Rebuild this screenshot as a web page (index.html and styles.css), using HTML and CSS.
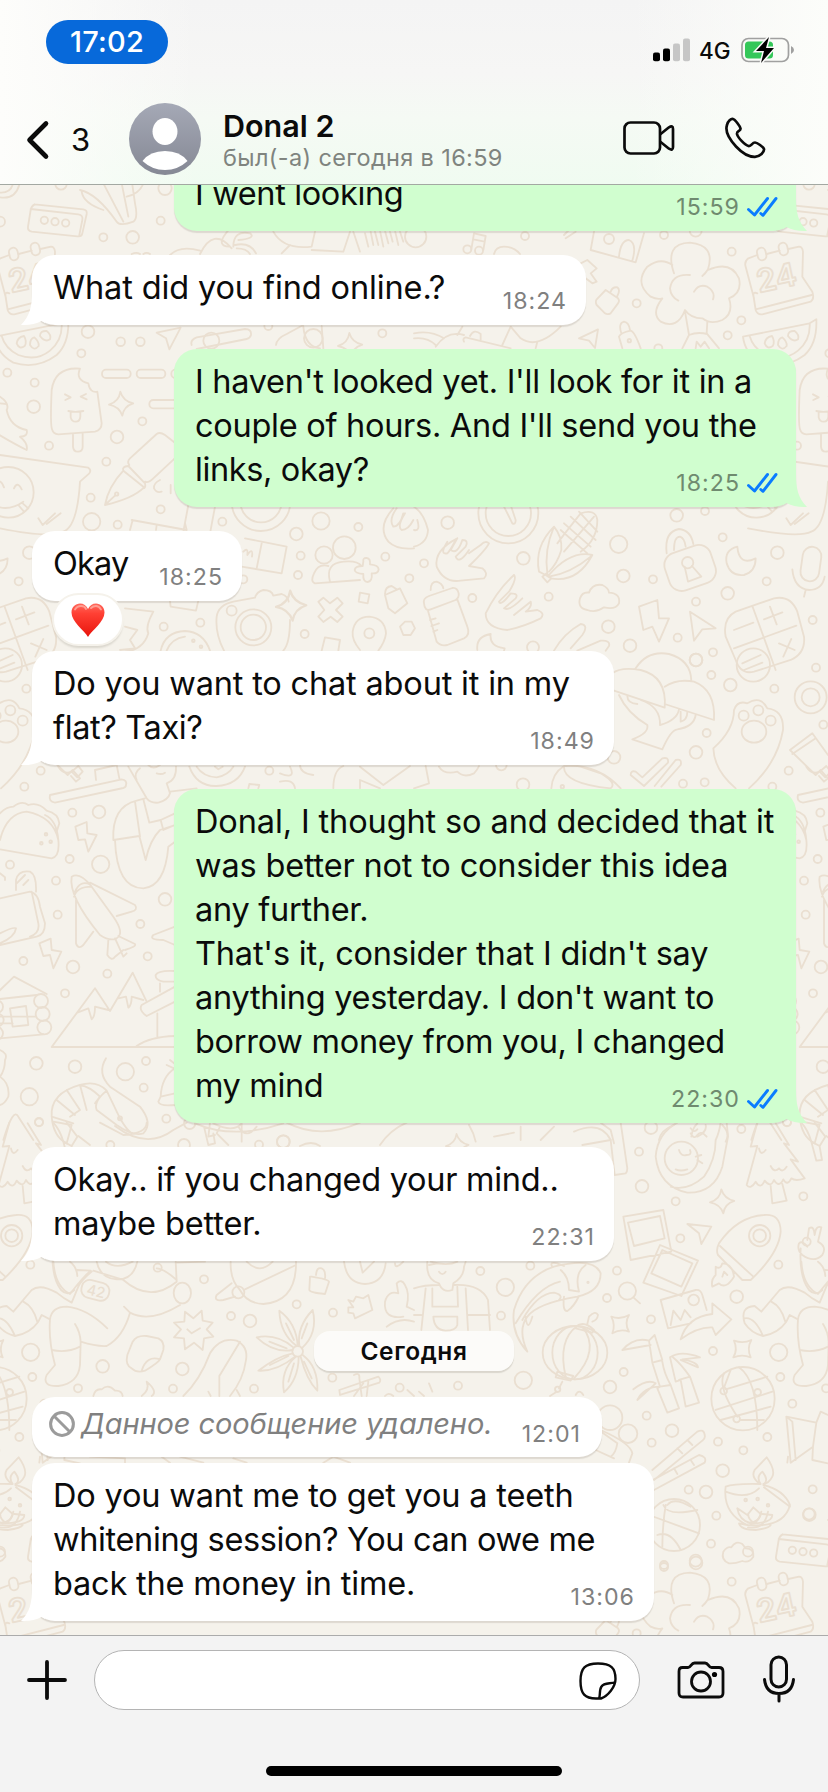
FILE: index.html
```html
<!DOCTYPE html>
<html lang="ru">
<head>
<meta charset="utf-8">
<title>Donal 2</title>
<link rel="stylesheet" href="styles.css">
</head>
<body>
<svg class="defs" aria-hidden="true">
  <defs>
    <symbol id="tail-in" viewBox="0 0 24 34"><path d="M11 0C11 14 9 24 0 33C8 33.500 15 32 20.500 29L24 31V0Z"/></symbol>
    <symbol id="tail-out" viewBox="0 0 24 34"><path d="M13 0C13 14 15 24 24 33C16 33.500 9 32 3.500 29L0 31V0Z"/></symbol>
    <symbol id="ticks" viewBox="0 0 32 22"><path d="M2.500 13.500L8.500 19L21.500 2.500M14.800 17.500L17 19.300L30 2.500" fill="none" stroke="#0a7cff" stroke-width="2.900" stroke-linecap="round" stroke-linejoin="round"/></symbol>
    <symbol id="spark" viewBox="-40 -40 80 80"><path d="M-2 -36Q6 -8 37 -1Q8 8 4 36Q-6 8 -36 3Q-6 -6 -2 -36Z"/></symbol>
    <linearGradient id="heart" x1="0" y1="0" x2="0" y2="1"><stop offset="0" stop-color="#ff6a5e"/><stop offset=".3" stop-color="#ff4034"/><stop offset="1" stop-color="#e8140c"/></linearGradient>
    <linearGradient id="ava" x1="0" y1="0" x2="0" y2="1"><stop offset="0" stop-color="#a5a9b6"/><stop offset="1" stop-color="#858894"/></linearGradient>
  </defs>
</svg>

<header class="top">
  <div class="status">
    <span class="clock">17:02</span>
    <div class="status-right">
      <svg width="38" height="24" viewBox="0 0 38 24"><rect x="0" y="14.500" width="7" height="8.800" rx="2"/><rect x="10" y="10.500" width="7" height="12.800" rx="2"/><g fill="#c6c6c6"><rect x="20" y="5.500" width="7" height="17.800" rx="2"/><rect x="30" y=".5" width="7" height="22.800" rx="2"/></g></svg>
      <span class="net">4G</span>
      <svg width="54" height="26" viewBox="0 0 54 26"><rect x="1" y="1.500" width="46.500" height="23" rx="6.500" fill="none" stroke="#a0a0a0" stroke-width="1.700"/><path d="M50 9Q53 10.500 53 13T50 17Z" fill="#a0a0a0"/><rect x="4" y="4.500" width="28" height="17" rx="3.500" fill="#34c759"/><path d="M28 0L15 14H23L20 26L33 11H25Z" fill="#000" stroke="#fafaf9" stroke-width="3" paint-order="stroke"/></svg>
    </div>
  </div>
  <div class="nav">
    <svg class="back" width="24" height="40" viewBox="0 0 24 40"><path d="M20 3.500L3.500 20L20 36.500" fill="none" stroke="#0b0b0b" stroke-width="4.600" stroke-linecap="round" stroke-linejoin="round"/></svg>
    <span class="unread">3</span>
    <svg class="avatar" width="72" height="72" viewBox="0 0 72 72"><circle cx="36" cy="36" r="36" fill="url(#ava)"/><ellipse cx="36" cy="28.500" rx="12.500" ry="13.500" fill="#fff"/><path d="M13.500 58Q21 48 36 48T58.500 58Q49 67 36 67T13.500 58Z" fill="#fff"/></svg>
    <div class="who"><span class="name">Donal 2</span><span class="seen">был(-а) сегодня в 16:59</span></div>
    <svg class="video" width="52" height="36" viewBox="0 0 52 36"><g fill="none" stroke="#0b0b0b" stroke-width="2.700" stroke-linejoin="round"><rect x="1.500" y="2.500" width="35.500" height="31" rx="6"/><path d="M37 14.500L46 7.300Q50 5 50 9V27Q50 31 46 28.700L37 21.500"/></g></svg>
    <svg class="phone" width="42" height="42" viewBox="0 0 42 42"><path d="M3 8C4 4 7 1.500 9 2C11 2.500 16 9 16.500 11.500C17 14 12.500 14 13 17C14 21 21 28 24.500 29C27.500 29.500 28 25.500 31 25.500C33 25.500 39.500 30 40 32C40.500 35 36 39.500 31 39.800C26 40 19 37 12 29.500C5 22 1 14 3 8Z" fill="none" stroke="#0b0b0b" stroke-width="2.700" stroke-linejoin="round"/></svg>
  </div>
</header>

<main class="chat">
  <svg class="wallpaper" viewBox="0 185 828 1450" aria-hidden="true">
    <defs>
      <g id="doodles">
        <g transform="scale(.33333)">
          <path d="M104 613L250 628Q262 630 260 642L247 700Q245 711 232 709L95 695Q82 692 84 680L92 630Q94 618 104 613M92 627L235 643Q250 646 247 660L238 705"/>
          <circle cx="133" cy="661" r="11"/><circle cx="165" cy="665" r="11"/><circle cx="197" cy="669" r="11"/>
          <path d="M240 570Q290 580 350 665Q360 680 400 665Q415 655 405 610L395 540M310 550L370 665M365 550L385 650M245 575Q250 610 310 630M0 592Q50 600 60 545M0 578Q35 580 40 545M380 590Q420 580 430 550"/>
          <circle cx="495" cy="565" r="20"/><circle cx="482" cy="662" r="12"/><circle cx="183" cy="552" r="17"/><circle cx="0" cy="665" r="15"/>
        </g>
        <g transform="translate(0 230) scale(.33333)">
          <circle cx="398" cy="22" r="19"/><circle cx="310" cy="22" r="12"/><circle cx="264" cy="305" r="19"/><circle cx="362" cy="335" r="13"/><circle cx="421" cy="335" r="13"/><circle cx="244" cy="370" r="12"/><circle cx="22" cy="428" r="12"/><circle cx="104" cy="458" r="12"/><circle cx="101" cy="530" r="19"/><circle cx="427" cy="574" r="12"/><circle cx="351" cy="621" r="19"/><circle cx="147" cy="647" r="12"/><circle cx="319" cy="695" r="12"/><circle cx="272" cy="803" r="12"/><circle cx="275" cy="875" r="26"/><circle cx="353" cy="884" r="12"/><circle cx="482" cy="838" r="12"/><circle cx="667" cy="875" r="12"/><circle cx="88" cy="968" r="19"/><circle cx="56" cy="1054" r="12"/><circle cx="889" cy="912" r="19"/><circle cx="963" cy="873" r="26"/><circle cx="1075" cy="891" r="12"/><circle cx="902" cy="977" r="12"/><circle cx="894" cy="1035" r="12"/><circle cx="1156" cy="980" r="12"/><circle cx="1228" cy="1045" r="12"/><circle cx="914" cy="1212" r="12"/><circle cx="491" cy="1190" r="12"/><circle cx="601" cy="1178" r="12"/><circle cx="1147" cy="310" r="12"/><circle cx="805" cy="288" r="12"/><circle cx="730" cy="1048" r="12"/>
          <path d="M-15 320Q-10 370 40 398Q110 420 170 375Q208 340 205 268M-15 320L185 280Q188 330 150 362Q110 395 55 375Q15 355 5 318M205 268L185 280"/>
          <path d="M50 340Q52 322 72 318Q82 335 74 348Q58 360 50 340ZM90 345Q90 325 103 322Q118 335 116 348Q102 365 90 345ZM120 318Q120 302 140 303Q155 315 150 328Q135 338 120 318Z"/>
          <path d="M157 600Q150 590 155 480Q165 410 240 416Q225 450 265 460Q270 490 292 485L305 580Q305 600 285 605L175 613Q160 612 157 600ZM219 613V650Q220 665 233 665Q248 665 248 650V610M195 493L212 502L196 510M258 492L242 500L260 508M205 543Q225 548 250 543M212 547V562Q215 575 227 575Q240 575 241 560V545"/>
          <rect x="306" y="419" width="86" height="25" rx="12"/><rect x="410" y="419" width="86" height="25" rx="12"/><rect x="514" y="419" width="86" height="25" rx="12"/><rect x="448" y="510" width="86" height="25" rx="12"/>
          <use href="#spark" x="323" y="481" width="80" height="80"/><use href="#spark" x="1010" y="305" width="80" height="80"/><use href="#spark" x="823" y="1077" width="100" height="100"/>
          <path d="M315 825Q325 770 370 722L432 772Q400 805 315 825ZM345 797L318 822M370 722Q365 710 385 708L435 760Q438 774 430 775M388 705Q380 695 390 685L470 612Q480 605 495 615L540 650M435 755Q445 760 460 745L530 680M480 750Q460 760 462 775Q470 790 485 785M512 765V790"/><circle cx="350" cy="792" r="5"/>
          <path d="M0 675L265 713Q275 720 268 730L240 755Q232 890 190 905Q150 925 0 895M115 865L128 885L165 850M140 882L182 850M-15 765Q0 740 12 772M42 775Q52 752 65 778M-30 820Q20 850 70 815M55 825L72 845M68 820L85 835"/><circle cx="25" cy="787" r="76"/>
          <path d="M0 500Q30 520 20 540Q30 590 80 600Q85 620 60 620Q85 640 80 660Q40 640 -10 610M0 520L20 522"/>
          <path d="M470 308L542 293L508 358L498 325ZM575 345Q570 330 590 322L735 297Q755 297 753 315Q750 325 740 327L590 357M828 345Q830 325 860 312L910 285M910 290Q915 350 960 355M965 288L970 355"/><circle cx="634" cy="332" r="24"/><circle cx="940" cy="325" r="28"/>
          <path d="M395 870L560 900L555 880M390 900L398 870M565 825L550 905M645 830L630 910M470 885L468 900M510 1115L512 1130L588 1142L595 1112"/>
          <circle cx="783" cy="815" r="88"/><circle cx="783" cy="815" r="62"/>
          <circle cx="1033" cy="953" r="34"/><circle cx="972" cy="975" r="26"/>
          <path d="M1080 1050L945 1060Q930 1055 942 1030Q955 1000 985 1008M990 1055Q975 1000 1030 995Q1070 990 1085 1008M1090 995Q1088 983 1100 984Q1112 985 1110 1003Q1135 1005 1136 1018Q1135 1032 1115 1030Q1118 1053 1103 1056Q1088 1055 1090 1032Q1065 1030 1064 1020Q1065 1008 1088 1008Z"/>
          <path d="M735 925L860 950L845 1030L725 1010M785 940L770 1015M730 965Q745 950 742 975Q760 950 756 980"/>
          <path d="M672 1262Q645 1210 650 1160Q655 1125 700 1115L765 1103Q770 1085 790 1080Q815 1080 820 1097L845 1092Q865 1100 866 1115M870 1170Q870 1240 850 1262"/><circle cx="760" cy="1192" r="54"/><circle cx="760" cy="1192" r="38"/><circle cx="695" cy="1142" r="15"/>
          <path d="M955 1115L970 1103L990 1120L1012 1103L1028 1120L1008 1140L1028 1160L1012 1176L992 1160L970 1176L955 1160L973 1140ZM1080 1088L1108 1093L1103 1120L1076 1115ZM1080 1260Q1055 1230 1058 1205Q1065 1160 1108 1160Q1155 1165 1158 1210Q1155 1235 1135 1262M965 1262L975 1222L1020 1230L1015 1262M1155 1095L1200 1075L1222 1120L1185 1150L1165 1135ZM1155 1092Q1155 1070 1175 1068L1190 1078M1200 1190L1215 1175H1235L1245 1195L1232 1215H1210Z"/><circle cx="1108" cy="1210" r="15"/>
          <path d="M482 1262Q495 1205 555 1203Q610 1205 630 1262M500 1262Q515 1225 555 1220M375 1135L460 1145Q435 1190 445 1210Q430 1260 375 1265M375 1190L412 1200L390 1230L405 1255L360 1260"/><circle cx="580" cy="1232" r="4"/><circle cx="603" cy="1250" r="4"/>
          <path d="M1180 835Q1130 890 1165 935Q1190 960 1242 955M1190 835Q1165 870 1180 890Q1200 890 1210 850M1215 850Q1190 890 1205 900Q1225 900 1240 870"/>
          <path d="M510 75Q540 45 600 62M600 72Q640 -10 695 55M690 50Q640 50 690 -5M700 50Q700 0 750 10Q770 25 715 30M705 45Q750 35 768 70M710 55Q740 55 750 72M395 72Q410 65 420 72M430 72Q440 65 450 72M820 5Q850 60 935 50L945 5M935 60L1030 65L1050 5M845 70L870 45M1060 5L1080 65M1095 10L1105 50M1112 5L1120 45M1125 5L1135 45M1140 2L1150 50M1155 2L1165 40M1170 5L1178 35M1185 2L1195 45M1200 5L1210 35"/>
        </g>
        <g transform="translate(414 230) scale(.33333)">
          <circle cx="333" cy="18" r="12"/><circle cx="845" cy="2" r="18"/><circle cx="750" cy="15" r="12"/><circle cx="953" cy="65" r="12"/><circle cx="668" cy="220" r="12"/><circle cx="982" cy="271" r="12"/><circle cx="941" cy="316" r="12"/><circle cx="733" cy="355" r="12"/><circle cx="101" cy="878" r="19"/><circle cx="328" cy="985" r="19"/><circle cx="30" cy="1000" r="12"/><circle cx="175" cy="1104" r="12"/><circle cx="404" cy="1100" r="12"/><circle cx="614" cy="943" r="26"/><circle cx="628" cy="1038" r="19"/><circle cx="717" cy="1048" r="12"/><circle cx="788" cy="856" r="19"/><circle cx="873" cy="843" r="12"/><circle cx="926" cy="922" r="12"/><circle cx="941" cy="1090" r="19"/><circle cx="846" cy="1115" r="12"/><circle cx="583" cy="1190" r="19"/><circle cx="648" cy="1247" r="19"/><circle cx="791" cy="1223" r="12"/><circle cx="357" cy="1252" r="18"/><circle cx="1196" cy="1170" r="12"/><circle cx="897" cy="1267" r="12"/><circle cx="846" cy="1290" r="19"/><circle cx="892" cy="1335" r="12"/>
          <path d="M180 10L215 18L208 60M180 10L172 58M178 28L212 35M240 72Q245 50 270 50Q300 50 318 72"/><circle cx="160" cy="58" r="12"/><circle cx="195" cy="62" r="12"/><circle cx="5" cy="20" r="32"/>
          <path d="M540 5L530 60L665 97L690 10M615 80Q620 30 645 30Q670 40 655 92M450 15L475 -10M455 25L485 5M500 100L520 90L548 115L530 130L548 155L535 160L515 145"/><circle cx="585" cy="27" r="15"/>
          <path d="M575 180L612 205Q618 212 612 220L590 250Q580 255 573 250L548 225Q543 215 548 208ZM590 185Q595 170 610 172Q620 180 610 198M495 325L552 298L543 354L525 332ZM622 310Q612 280 630 275Q645 278 648 300M615 320Q620 308 650 302Q662 305 680 355M615 320L625 355M150 335Q145 325 155 322L290 355M168 318Q180 295 200 312L200 330M130 315L145 290M265 345L290 290L320 325Q370 360 440 290M370 335L365 355M0 310Q50 300 90 325M0 325Q40 320 65 345M65 350Q100 300 150 315"/><circle cx="646" cy="332" r="5"/>
          <path d="M780 130Q750 40 828 38Q905 45 882 118Q875 130 865 138M775 105Q740 80 700 110Q660 160 710 200Q730 210 745 205Q710 250 740 275Q790 300 813 240Q830 265 865 265Q890 285 925 270Q960 250 945 205Q985 190 975 145Q950 90 882 120M828 135Q775 130 768 175Q770 200 793 212M840 185Q855 160 880 170Q905 185 897 208M813 245L825 315L805 355M880 275L878 310L915 355M825 315Q850 305 880 312M845 355L848 335L860 350L872 335L885 355"/>
          <path d="M1030 75L1003 85Q990 95 995 110L1020 205M1058 72L1097 62M1123 57L1155 50Q1165 50 1167 65L1165 140L1195 185Q1202 208 1190 215L1045 253Q1030 255 1025 240L1018 195Q1018 185 1030 190M1025 238L1193 195"/><rect x="1030" y="53" width="26" height="38" rx="13" transform="rotate(-12 1043 72)"/><rect x="1095" y="38" width="26" height="38" rx="13" transform="rotate(-12 1108 57)"/>
          <text x="1035" y="188" transform="rotate(-12 1035 188)" font-size="95">24</text>
          <path d="M758 970Q750 905 795 897Q830 900 838 942M780 960Q780 920 798 920Q812 925 815 950"/><rect x="756" y="955" width="145" height="118" rx="38" transform="rotate(-19 828 1014)"/><path d="M812 1010L822 1055L862 1040L834 1008"/><circle cx="821" cy="998" r="17"/>
          <path d="M970 950Q930 960 938 1000Q950 1040 990 1035Q1025 1025 1025 985Q975 1010 970 950Z"/><rect x="1163" y="950" width="56" height="104" rx="28" transform="rotate(8 1190 1000)"/><path d="M1135 1018Q1140 1075 1185 1080Q1225 1080 1232 1040M1175 1080L1170 1100"/>
          <circle cx="283" cy="850" r="90"/><circle cx="283" cy="850" r="68"/><path d="M265 820L295 880Q305 885 305 870L290 825"/>
          <path d="M420 890Q360 950 375 1025L395 1035L410 1045Q490 1060 535 975Q470 960 405 1035M420 890Q445 920 442 960Q430 1000 405 1025M400 1030Q390 960 420 890M405 1040Q470 1030 530 980M385 1040L398 1030L412 1045L400 1057ZM440 900L520 970M450 880L530 950M470 860L545 930M495 845L550 905M430 940Q460 900 500 850Q545 835 550 870Q550 930 500 965M450 965L540 860"/>
          <path d="M130 925Q60 960 68 1010Q90 1060 140 1052L210 1045Q225 1030 205 1015L165 1008Q215 960 225 940Q215 930 200 945L165 970M130 925L110 960Q130 975 145 930Q165 930 155 950L125 980Q135 1005 165 960M100 935Q75 975 100 970Q110 960 125 930"/>
          <path d="M300 1035Q250 1080 215 1150Q215 1195 280 1200Q330 1190 380 1165Q395 1150 370 1140L335 1145Q355 1130 350 1115L300 1155M300 1035Q310 1045 285 1085L255 1115Q260 1130 290 1090Q315 1090 305 1105L270 1135Q285 1145 325 1105"/>
          <path d="M50 1080Q50 1055 68 1055Q85 1060 88 1075M30 1120Q26 1105 45 1098L115 1074Q130 1072 134 1090Q136 1102 125 1110L50 1138Q32 1145 30 1120ZM42 1142L68 1235Q80 1250 100 1245L150 1225Q170 1215 160 1190L130 1108M48 1170L65 1165M52 1188L75 1180M58 1205L70 1200"/>
          <path d="M520 1140Q490 1135 498 1105Q505 1085 525 1088Q535 1060 565 1065Q585 1075 585 1088Q620 1090 615 1120Q605 1140 570 1132Q545 1150 520 1140ZM675 1130L730 1110L735 1165L765 1165L735 1235L715 1190L688 1200ZM828 1145L905 1195L865 1198L840 1232Z"/>
          <path d="M190 1260Q185 1220 230 1212Q225 1250 272 1255L270 1262M420 1262Q450 1210 500 1182Q525 1185 505 1215L470 1255M490 1262L560 1232Q590 1230 585 1248L575 1262"/>
          <path d="M1080 1105Q1130 1095 1150 1145L1170 1220Q1175 1270 1130 1290L1020 1325Q980 1335 965 1290L935 1220Q925 1165 965 1145L1080 1105M1015 1128L1085 1320M960 1255L1147 1187M960 1200L1018 1178M1050 1168L1105 1147M1068 1130L1088 1183M1095 1240L1142 1260M1132 1227L1108 1280M985 1300L1040 1275M990 1320L1045 1298"/><circle cx="1018" cy="1305" r="50"/>
          <path d="M0 830Q30 850 42 900Q40 940 0 950M0 900Q20 905 10 870"/>
        </g>
        <g transform="translate(0 640) scale(.33333)">
          <circle cx="79" cy="146" r="12"/><circle cx="122" cy="392" r="12"/><circle cx="73" cy="440" r="12"/><circle cx="217" cy="518" r="12"/><circle cx="297" cy="516" r="19"/><circle cx="209" cy="657" r="12"/><circle cx="302" cy="673" r="26"/><circle cx="30" cy="674" r="12"/><circle cx="168" cy="722" r="12"/><circle cx="173" cy="824" r="12"/><circle cx="495" cy="778" r="19"/><circle cx="421" cy="852" r="12"/><circle cx="443" cy="949" r="12"/><circle cx="70" cy="963" r="12"/><circle cx="219" cy="981" r="19"/><circle cx="322" cy="1001" r="12"/><circle cx="195" cy="1060" r="12"/><circle cx="109" cy="1270" r="19"/><circle cx="225" cy="1280" r="19"/><circle cx="376" cy="1295" r="26"/><circle cx="438" cy="1263" r="12"/><circle cx="431" cy="1343" r="12"/><circle cx="88" cy="1370" r="26"/><circle cx="117" cy="1446" r="12"/><circle cx="499" cy="1436" r="12"/><circle cx="569" cy="1450" r="17"/><circle cx="808" cy="392" r="12"/><circle cx="850" cy="1505" r="19"/>
          <path d="M150 465L365 418Q382 420 378 435Q378 442 370 444L165 488Q145 485 150 465ZM288 420L285 390L350 375L358 415M215 395L232 412L248 395L235 378ZM175 380Q190 405 215 395M410 420Q400 400 420 385M385 380L440 475Q450 490 475 488Q505 480 510 460L500 430Q530 420 528 380M445 375Q460 390 480 375M470 400Q485 405 495 398"/>
          <path d="M568 380Q590 440 650 438Q715 435 735 380M590 380Q610 410 650 412Q685 405 700 380M645 380L655 388L668 380M0 520Q20 500 40 500Q65 480 85 495Q115 485 140 512Q175 520 178 550L170 575M0 600Q20 520 80 515Q160 530 175 600Q180 650 155 655L0 628M135 525Q170 540 175 600M0 520Q-20 530 -25 560"/><circle cx="138" cy="583" r="4"/><circle cx="124" cy="610" r="4"/><circle cx="152" cy="605" r="4"/>
          <path d="M226 560L260 546L262 580L290 585L265 635L255 598L235 600ZM118 910L152 896L155 930L184 935L160 985L150 945L130 948Z"/>
          <path d="M340 600Q335 500 410 482L435 475M340 600L418 588L437 660Q450 600 480 570L525 555M345 600Q350 745 430 745Q495 740 505 620L525 605M405 485L420 590M430 478L448 548L482 540L490 570L525 555M482 540L525 520M510 455L590 445"/>
          <path d="M215 710Q240 695 275 740L340 830Q375 880 350 895Q330 905 300 885Q205 770 215 710ZM222 770Q230 740 275 740M225 755Q240 720 270 733M270 728L405 795Q415 810 395 815L350 828M228 780V910Q235 930 250 915L280 875M325 900L322 945Q335 965 345 950L370 930M345 895L370 950L380 940M355 888L405 912Q410 920 375 930M525 860L460 885Q445 900 490 900L525 915"/>
          <path d="M155 1221L285 1045L330 1113L398 998L440 1085M232 1118L265 1105L275 1138Q285 1130 285 1100L325 1110M355 1075L378 1070L385 1103Q395 1095 395 1070L430 1080M155 1221H525M525 1040L425 1095Q415 1110 440 1128L525 1085M480 1030V1055M525 1025H490Q465 1020 467 1005Q475 990 525 993M472 1120V1190M410 1218Q450 1190 525 1188"/>
          <path d="M-10 1078L110 1065M-10 1060L42 1010L140 1062M-10 1130H105M0 1195L130 1183M30 1105L78 1098L85 1155L38 1160ZM-10 1150H38"/><circle cx="123" cy="1083" r="21"/><circle cx="128" cy="1122" r="21"/><circle cx="133" cy="1162" r="21"/><circle cx="-10" cy="1100" r="19"/><circle cx="-8" cy="1140" r="19"/><circle cx="-10" cy="1180" r="19"/>
          <path d="M318 1255Q290 1300 330 1340L420 1400Q460 1450 430 1480Q400 1490 350 1455L290 1410Q280 1385 320 1352L360 1435Q380 1470 395 1480M320 1352Q290 1320 240 1335Q150 1360 155 1430Q160 1490 200 1510M240 1335Q270 1340 300 1370M200 1350L240 1410M170 1380L225 1425M155 1430L220 1450M240 1335L260 1410M300 1370L285 1390M210 1430L240 1410M160 1445L215 1455L200 1510"/><circle cx="360" cy="1435" r="6"/>
          <path d="M525 1285Q485 1310 482 1370L475 1385Q478 1400 525 1395M500 1275L522 1285M510 1260L522 1270M482 1370L525 1360M0 1230Q25 1240 15 1260Q15 1290 0 1310Q30 1330 25 1370Q10 1400 -10 1395M10 1500Q40 1400 55 1430L100 1500M840 400Q890 420 870 380M1000 445Q1000 390 1030 378M840 425Q880 415 885 445M940 405Q900 400 900 375M1080 380L1150 435L1230 378M1080 445L1080 420L1140 445M745 445L748 432L778 435L775 445"/>
          <path d="M0 775L90 755Q115 760 120 800L135 850Q135 885 110 890L0 915M95 755L115 850Q120 880 90 890M48 750V720Q55 690 90 695Q110 705 108 755M50 730L75 705M70 735L85 720M0 700L15 712V720M0 880Q40 860 48 865Q45 890 0 910"/>
          <path d="M585 1450Q700 1500 850 1450M612 1460L625 1515L645 1510L640 1480M715 1460Q740 1500 770 1460"/>
        </g>
        <g transform="translate(414 640) scale(.33333)">
          <circle cx="846" cy="60" r="19"/><circle cx="949" cy="135" r="19"/><circle cx="878" cy="279" r="12"/><circle cx="846" cy="337" r="19"/><circle cx="600" cy="352" r="19"/><circle cx="807" cy="431" r="12"/><circle cx="872" cy="427" r="12"/><circle cx="327" cy="434" r="19"/><circle cx="262" cy="375" r="16"/><circle cx="1228" cy="254" r="12"/><circle cx="1206" cy="83" r="12"/><circle cx="711" cy="1463" r="19"/><circle cx="982" cy="1467" r="12"/>
          <path d="M600 152L752 203Q760 110 680 90Q620 80 595 100M665 85Q700 30 765 42Q830 60 832 122M752 140Q790 115 840 125Q905 150 900 240L752 192M615 165Q640 220 700 255Q705 280 655 298L745 328Q770 270 790 268Q840 260 845 225M680 180Q740 200 738 255Q790 240 795 208M640 168Q640 190 670 192M820 215Q820 240 800 245V215"/>
          <path d="M965 445Q900 390 898 325Q960 270 960 210Q970 180 1000 190Q1040 165 1060 205Q1110 210 1107 270Q1090 370 1005 445"/><circle cx="989" cy="227" r="15"/><circle cx="1033" cy="211" r="15"/><circle cx="1070" cy="242" r="15"/><ellipse cx="1020" cy="275" rx="37" ry="33"/>
          <path d="M650 405Q650 390 665 395L685 412L745 355Q765 350 762 368L690 438ZM722 438L785 360Q805 355 800 375L742 440M412 445Q415 400 450 378Q550 370 620 445M450 378Q445 430 590 445Q610 430 560 400L500 380M75 380Q90 405 130 395Q150 415 180 400Q190 390 195 378M0 445L45 430L35 378"/><circle cx="445" cy="440" r="5"/>
          <circle cx="1190" cy="172" r="48"/><circle cx="1190" cy="172" r="27"/><path d="M1128 330L1195 280L1242 345M1135 342L1205 295M1128 330L1205 405L1220 390L1242 415L1230 425L1215 408"/>
          <path d="M875 1455Q880 1475 850 1490M830 1465Q840 1480 850 1468M780 1455Q740 1470 735 1500M925 1455Q950 1480 935 1505M165 1455Q180 1480 185 1505M240 1490L300 1478M320 1460V1500M380 1500L420 1460M480 1475Q560 1440 590 1500"/>
        </g>
        <g transform="translate(0 1120) scale(.33333)">
          <circle cx="117" cy="7" r="12"/><circle cx="331" cy="75" r="12"/><circle cx="552" cy="75" r="18"/><circle cx="777" cy="74" r="12"/><circle cx="850" cy="65" r="19"/><circle cx="473" cy="443" r="12"/><circle cx="612" cy="478" r="12"/><circle cx="693" cy="588" r="12"/><circle cx="750" cy="603" r="19"/><circle cx="890" cy="553" r="12"/><circle cx="999" cy="578" r="12"/><circle cx="92" cy="697" r="26"/><circle cx="308" cy="739" r="19"/><circle cx="547" cy="747" r="19"/><circle cx="519" cy="806" r="12"/><circle cx="762" cy="806" r="12"/><circle cx="997" cy="773" r="12"/><circle cx="1199" cy="803" r="12"/><circle cx="234" cy="805" r="12"/><circle cx="97" cy="771" r="12"/><circle cx="58" cy="951" r="12"/>
          <path d="M160 8Q180 30 190 65L215 78L232 50L200 8M190 65L205 122L222 120L215 80M235 48L270 75M300 8L370 45Q440 40 440 8M345 18Q440 90 520 30M520 30L560 8M630 8L625 50L645 45M660 20L650 40L685 75M640 10Q700 40 725 10L725 65M860 8Q960 60 1080 8M1140 75Q1170 30 1220 8M900 78Q935 60 960 78"/>
          <path d="M160 425Q165 500 210 522Q250 470 272 452L232 450M210 425Q230 440 232 468M290 425Q300 475 350 478Q400 480 412 425M318 425Q350 450 398 425M215 548Q190 535 170 518Q120 490 95 510L40 575L20 558Q-25 560 -10 610Q10 640 45 648Q90 640 115 605L125 585L150 598M70 545Q100 560 112 605M-10 595Q20 590 45 648M215 548L235 500Q245 480 275 455M280 452L370 480Q450 550 530 485M150 598Q155 560 200 560Q260 565 322 625M150 598Q145 660 165 735L140 765Q125 800 175 798Q235 790 240 735L242 665Q240 635 225 612M155 690Q200 700 240 680M242 665Q290 680 320 678Q370 650 390 578L372 560M390 578Q450 610 540 555M527 425L530 485M527 428L615 425M470 445Q490 445 530 480"/>
          <rect x="244" y="484" width="84" height="54" rx="24" transform="rotate(14 286 511)"/><text class="bib" x="257" y="522" transform="rotate(14 257 522)" font-size="44">42</text><ellipse cx="547" cy="519" rx="26" ry="31"/>
          <path d="M692 425Q690 480 720 510Q740 550 790 552Q890 545 888 425M735 508L888 435M695 490L650 525Q640 545 670 540L705 530M740 425Q780 465 818 425M930 470L928 510Q930 518 975 522L987 485Q985 478 935 470ZM948 465Q950 440 965 445Q978 450 975 475M1032 425Q1040 490 1095 492Q1150 490 1157 430M1080 425L1088 458L1122 425M1185 430Q1185 450 1210 425M1045 540L1060 545L1068 530L1090 535L1105 525L1117 570L1065 595L1060 580L1045 578V562H1060Z"/><circle cx="715" cy="517" r="18"/>
          <path d="M522 608L553 605L555 575L580 595L605 572L608 602L638 608L620 628L640 650L612 655L608 690L582 668L555 688L552 655L522 652L543 628ZM562 628L575 640L600 625"/>
          <path d="M398 665Q410 645 440 648L475 655Q495 665 490 690L480 718Q475 728 435 752Q410 760 395 745Q375 735 382 705ZM480 718Q440 705 425 752"/>
          <path d="M550 828Q600 780 630 700Q660 650 710 662Q745 680 738 720Q730 780 690 828M720 665L658 768V828M710 810L720 828M625 815L632 828M280 828Q285 805 305 808Q325 790 345 812Q365 810 368 828M425 828Q450 810 440 785Q475 815 455 828"/>
          <circle cx="893" cy="694" r="16"/><path d="M890 678Q840 640 838 572Q890 610 893 678M898 678Q890 620 938 570Q955 640 905 685M878 690Q820 700 770 652Q830 640 880 682M878 700Q830 710 775 752Q830 755 885 710M888 710Q840 750 852 817Q895 780 896 712M902 710Q920 780 952 812Q955 740 908 705M858 610L882 660M922 610L905 655M808 665L860 685M810 735L865 708M865 785L882 730M935 775L912 725"/>
          <path d="M1018 810L1135 770Q1145 780 1138 788L1020 825ZM1062 765Q1080 755 1078 775L1085 828M1090 790L1062 828M1105 785L1100 828M1155 828Q1165 815 1180 828M1242 605Q1200 590 1160 620M1210 590Q1150 600 1155 545Q1165 510 1195 520L1190 490Q1205 475 1215 495Q1230 520 1220 560L1242 570"/>
          <path d="M120 1010L118 1028M270 1010L375 1015V1028M485 1010L510 1028M540 1010L610 1028M700 1015L740 1028M970 1028L1000 1010L1050 1028"/>
        </g>
        <g transform="translate(414 1120) scale(.33333)">
          <circle cx="675" cy="95" r="12"/><circle cx="684" cy="199" r="19"/><circle cx="785" cy="244" r="12"/><circle cx="799" cy="355" r="12"/><circle cx="609" cy="452" r="12"/><circle cx="579" cy="534" r="12"/><circle cx="711" cy="598" r="12"/><circle cx="968" cy="530" r="19"/><circle cx="1093" cy="434" r="12"/><circle cx="1168" cy="229" r="12"/><circle cx="199" cy="453" r="12"/><circle cx="274" cy="502" r="26"/><circle cx="349" cy="437" r="12"/><circle cx="261" cy="587" r="12"/><circle cx="897" cy="693" r="12"/><circle cx="629" cy="756" r="12"/><circle cx="588" cy="801" r="19"/><circle cx="328" cy="781" r="26"/><circle cx="132" cy="797" r="12"/><circle cx="698" cy="887" r="12"/><circle cx="774" cy="932" r="19"/><circle cx="713" cy="968" r="12"/><circle cx="912" cy="965" r="12"/><circle cx="988" cy="991" r="12"/><circle cx="1135" cy="851" r="12"/><circle cx="588" cy="893" r="37"/><circle cx="642" cy="941" r="28"/><circle cx="926" cy="1052" r="19"/>
          <use href="#spark" x="884" y="204" width="80" height="80"/><use href="#spark" x="92" y="38" width="75" height="75"/><path d="M592 590Q620 600 645 585Q630 610 645 635Q620 625 595 640Q605 615 592 590ZM960 662Q988 672 1012 660Q998 685 1010 712Q985 702 958 712Q972 690 960 662Z"/>
          <path d="M790 8Q730 40 725 110Q735 200 820 218Q900 220 925 140L942 50L938 8M920 8Q915 40 905 60Q905 120 870 170Q820 215 770 200M830 40Q840 60 850 45Q860 30 878 50M832 50Q835 25 850 10M795 90Q800 110 818 105Q835 105 828 90M785 148Q800 155 820 148M845 110L862 105M850 120L865 130"/><circle cx="802" cy="115" r="50"/>
          <path d="M1030 8L1010 80L1030 78L998 195Q1010 210 1025 185Q1040 210 1052 182Q1070 205 1080 180Q1095 205 1108 178Q1120 200 1132 175Q1145 185 1172 175L1130 118L1152 125L1110 70L1125 75L1085 10M1070 198L1075 250L1118 242L1105 192M1035 85Q1040 110 1055 90M1070 138Q1080 160 1095 145Q1105 160 1118 140"/>
          <path d="M560 8L590 30L600 70M505 75L590 60L602 165L635 160Q640 155 640 145L620 8"/>
          <path d="M628 290L748 270L772 395L650 420ZM642 308L738 288L752 355L660 378ZM738 375L852 422L802 528L688 488ZM745 390L835 430L802 500L712 460ZM740 540L845 510Q860 508 865 525L878 570M740 540L762 625L830 610M770 615L778 572L800 600L812 570L830 592M800 658Q820 590 895 582V550L952 598L905 645L895 622Q850 620 800 658ZM820 312L892 320L862 372L855 340Z"/><circle cx="839" cy="540" r="16"/>
          <path d="M915 370Q970 290 1050 285Q1100 280 1100 335Q1095 400 1010 480L985 480L912 405Q905 390 915 370ZM918 378L1018 470M960 470Q955 430 925 430Q920 450 905 440L905 465Q890 480 895 500L915 490Q935 510 960 470M925 470L930 455L940 465"/><circle cx="1037" cy="347" r="32"/><circle cx="1037" cy="347" r="19"/>
          <path d="M1160 385Q1155 470 1185 510Q1205 530 1225 510M1180 360L1185 325Q1200 315 1202 345Q1205 315 1222 322L1212 365Q1240 380 1225 405Q1200 430 1165 405Q1148 390 1155 370Q1165 360 1180 380"/><circle cx="1178" cy="365" r="12"/>
          <circle cx="640" cy="513" r="26"/><path d="M658 532L678 550M340 695Q290 640 300 570Q330 470 420 440Q540 410 560 460Q560 515 490 530Q370 550 340 590Q310 630 340 695ZM415 440Q405 425 430 430L450 438M440 450Q465 470 465 510L495 515Q480 460 515 435M450 530Q445 575 460 573Q480 560 495 528M305 610Q370 500 438 485M325 600Q370 520 420 518Q450 525 435 540M335 590Q340 640 355 590"/><circle cx="522" cy="487" r="2"/>
          <path d="M40 425Q35 480 75 490Q85 520 115 510L118 490Q150 470 150 440L155 425M0 505Q30 495 75 495M118 495Q200 490 222 540L228 630M35 505L22 630M55 505V560H132L130 500M155 505L162 630M58 590H130V615Q125 632 95 632Q60 630 58 590M0 585H22M160 585H228M45 435L70 430M75 455Q85 470 95 455M50 425Q100 440 130 425"/>
          <path d="M485 620Q510 600 540 630L535 638L485 625ZM520 612L525 590Q545 570 552 585Q550 600 535 605M430 755L478 768L470 782L425 772ZM445 785L435 805M428 815L408 828M485 825Q495 805 508 825"/><ellipse cx="483" cy="698" rx="97" ry="80"/><ellipse cx="483" cy="698" rx="68" ry="80"/><path d="M490 618Q430 660 455 770M505 620Q560 690 480 775"/><circle cx="431" cy="808" r="8"/>
          <path d="M625 690Q660 650 705 662L722 645L745 720L715 728L738 800L730 805L760 878L795 865L770 795L738 800M705 662L715 728M625 690L710 675M745 725Q750 760 770 795M768 712L785 785L800 780L815 860L855 848L828 770L795 780M775 710Q800 730 828 770M768 712Q800 690 858 712L805 718Q850 725 852 742L800 720M658 808Q700 775 725 790L670 840Q690 800 738 800"/>
          <circle cx="987" cy="836" r="95"/><circle cx="929" cy="813" r="10"/><circle cx="1031" cy="817" r="10"/><circle cx="968" cy="897" r="10"/><path d="M930 760Q910 800 970 890M975 742Q1030 780 1030 930M935 808L1060 770M905 870L1075 815M920 900L1070 860M980 900L1050 900M930 803L950 750"/>
          <path d="M1117 890L1207 908L1197 980L1130 1028ZM1117 890L1135 905L1145 1020M1207 908L1220 875L1242 885M1197 980L1195 1020L1242 1030"/>
          <path d="M0 828L-20 810M15 815L30 828M45 790L55 815M715 1050L850 935Q870 925 872 945Q875 955 865 962L720 1080M790 985L805 1000M820 960L835 975M720 1078L855 1005Q880 1010 872 1028L720 1110M780 1045L790 1062M830 1020L840 1035M540 920L610 970Q605 1000 590 1010M560 930Q650 970 655 1000L645 1028M545 990L600 1015"/>
        </g>
        <g transform="translate(414 1380) scale(.33333)">
          <circle cx="876" cy="336" r="19"/><circle cx="824" cy="329" r="12"/><circle cx="907" cy="407" r="12"/><circle cx="891" cy="491" r="12"/><circle cx="750" cy="561" r="12"/><circle cx="846" cy="549" r="19"/><circle cx="1186" cy="404" r="19"/><circle cx="1196" cy="328" r="12"/><circle cx="780" cy="435" r="78"/>
          <path d="M705 405L855 460M755 375Q745 440 745 500M748 375Q760 410 850 390M730 465Q770 450 800 510M830 380Q780 350 760 375"/>
          <path d="M1040 312Q960 310 935 320Q925 400 1000 435Q1110 445 1128 375Q1110 330 1048 315M1035 310Q1010 290 1022 270Q1050 240 1058 232Q1085 270 1075 290Q1065 310 1048 312M1040 312Q1025 290 1045 275Q1065 300 1050 312M1000 435L975 430Q980 450 1025 450Q1065 445 1070 435M935 335Q1000 360 1035 325M1050 322L1128 380M970 385Q975 420 1010 430Q1075 430 1075 405L1045 402M970 385L1000 405L1018 382L1040 402Q1035 420 1020 430Q1000 415 1003 400"/>
          <circle cx="995" cy="360" r="4"/><circle cx="1031" cy="357" r="4"/><circle cx="1062" cy="376" r="4"/>
          <path d="M945 550Q920 540 928 515Q940 498 952 502Q965 480 985 492L995 505Q1020 505 1018 530Q1005 550 985 543Q960 552 945 550Z"/>
        </g>
      </g>
    </defs>
    <use href="#doodles"/><use href="#doodles" x="748"/><use href="#doodles" x="-748"/>
    <use href="#doodles" y="1330"/><use href="#doodles" x="748" y="1330"/><use href="#doodles" x="-748" y="1330"/>
  </svg>

  <div class="msg out first"><p><span class="t4">I went looking</span></p><span class="meta">15:59<svg><use href="#ticks"/></svg></span><svg class="tail"><use href="#tail-out"/></svg></div>
  <div class="msg in w1"><p><span class="t1">What did you find online.?</span></p><span class="meta">18:24</span><svg class="tail"><use href="#tail-in"/></svg></div>
  <div class="msg out"><p><span class="t3">I haven't looked yet. I'll look for it in a</span><br><span class="t3">couple of hours. And I'll send you the</span><br><span class="t4">links, okay?</span></p><span class="meta">18:25<svg><use href="#ticks"/></svg></span><svg class="tail"><use href="#tail-out"/></svg></div>
  <div class="msg in w2 reacted"><p><span class="t5">Okay</span></p><span class="meta">18:25</span>
    <span class="reaction"><svg width="36" height="36" viewBox="0 0 36 36"><path d="M18 35C14 28 1.500 20 1.500 10.500C1.500 5 5.500 1.500 10 1.500C13.500 1.500 16.500 3.500 18 7C19.500 3.500 22.500 1.500 26 1.500C30.500 1.500 34.500 5 34.500 10.500C34.500 20 22 28 18 35Z" fill="url(#heart)"/><path d="M5 7.500Q7 4 11 4T16 7M21 6Q23 4 26 4T31 7.500" stroke="#ff9d92" stroke-width="1.800" fill="none" stroke-linecap="round"/></svg></span>
  </div>
  <div class="msg in w3"><p><span class="t2">Do you want to chat about it in my</span><br><span class="t4">flat? Taxi?</span></p><span class="meta">18:49</span><svg class="tail"><use href="#tail-in"/></svg></div>
  <div class="msg out"><p><span class="t1">Donal, I thought so and decided that it</span><br><span class="t2">was better not to consider this idea</span><br><span class="t3">any further.</span><br><span class="t2">That's it, consider that I didn't say</span><br><span class="t3">anything yesterday. I don't want to</span><br><span class="t3">borrow money from you, I changed</span><br><span class="t4">my mind</span></p><span class="meta">22:30<svg><use href="#ticks"/></svg></span><svg class="tail"><use href="#tail-out"/></svg></div>
  <div class="msg in w3"><p><span class="t3">Okay.. if you changed your mind..</span><br><span class="t1">maybe better.</span></p><span class="meta">22:31</span><svg class="tail"><use href="#tail-in"/></svg></div>
  <div class="day">Сегодня</div>
  <div class="msg in w4 deleted"><svg class="ban" width="26" height="26" viewBox="0 0 26 26"><circle cx="13" cy="13" r="11.400"/><path d="M5 5L21 21"/></svg><p>Данное сообщение удалено.</p><span class="meta">12:01</span></div>
  <div class="msg in w5"><p><span class="t2">Do you want me to get you a teeth</span><br><span class="t4">whitening session? You can owe me</span><br><span class="t2">back the money in time.</span></p><span class="meta">13:06</span><svg class="tail"><use href="#tail-in"/></svg></div>
</main>

<footer class="composer">
  <div class="row">
    <svg class="plus" width="40" height="40" viewBox="0 0 40 40"><path d="M20 2V38M2 20H38" stroke="#0b0b0b" stroke-width="3.800" stroke-linecap="round"/></svg>
    <div class="field"><svg width="38" height="38" viewBox="0 0 38 38"><path d="M22 36.500H17C6 36.500 1.500 32 1.500 19S6 1.500 19 1.500S36.500 6 36.500 17C36.500 25 29 34 22 36.500ZM20 36.500C21.500 34 20 28 22.500 24.500C25 20.500 32 22 36.500 20" fill="none" stroke="#0b0b0b" stroke-width="2.400" stroke-linejoin="round"/></svg></div>
    <svg class="cam" width="48" height="38" viewBox="0 0 48 38"><g fill="none" stroke="#0b0b0b" stroke-width="2.800" stroke-linejoin="round"><path d="M5.500 6.500H11C14 6.500 14 2 17.500 2H28C31.500 2 31.500 6.500 34.500 6.500H42Q46 6.500 46 10.500V32Q46 36 42 36H6Q2 36 2 32V10.500Q2 6.500 5.500 6.500Z"/><circle cx="24" cy="20.500" r="9.500"/></g><circle cx="37.500" cy="13.500" r="2.600"/></svg>
    <svg class="mic" width="34" height="48" viewBox="0 0 34 48"><g fill="none" stroke="#0b0b0b" stroke-width="3" stroke-linecap="round"><rect x="9" y="2" width="15.500" height="30" rx="7.750"/><path d="M2.500 24.500Q4 38.500 17 38.500T31.500 24.500M17 38.500V46"/></g></svg>
  </div>
  <div class="home"></div>
</footer>
</body>
</html>
```
FILE: styles.css
```css
* { box-sizing: border-box; }
body {
  margin: 0;
  width: 828px;
  height: 1792px;
  overflow: hidden;
  position: relative;
  display: flex;
  flex-direction: column;
  font-family: Inter, "Noto Sans", sans-serif;
  color: #0b0b0b;
  background: #f3f3f3;
}
svg { display: block; flex: none; }
.defs { position: absolute; width: 0; height: 0; }

.top {
  height: 185px;
  border-bottom: 1px solid #a3a8a2;
  background:
    linear-gradient(90deg, #fdfdfb 0, rgba(253,253,251,0) 24%, rgba(253,253,251,0) 76%, #fcfdfa 100%),
    linear-gradient(180deg, #f4f4f4 0, #f6f6f5 40%, #f5faf4 65%, #f0fbf1 100%);
}
.status { height: 95px; display: flex; justify-content: space-between; padding: 20px 33px 0 46px; }
.clock {
  width: 122px; height: 44px; border-radius: 22px;
  background: #0769da; color: #fff;
  font-size: 29px; font-weight: 500; line-height: 44px; letter-spacing: .2px; text-align: center;
}
.status-right { display: flex; align-items: flex-start; padding-top: 17px; }
.status-right svg:first-child { margin-top: 1px; }
.net { width: 33px; margin: 0 9px 0 8px; font-size: 22.500px; font-weight: 500; line-height: 28px; }
.nav { height: 89px; display: flex; align-items: flex-start; padding-left: 26px; }
.back { margin-top: 25px; }
.unread { width: 58px; margin-left: 21px; padding-top: 25px; font-size: 31px; line-height: 40px; }
.avatar { margin-top: 8px; }
.who { display: flex; flex-direction: column; width: 400px; margin-left: 22px; padding-top: 12px; }
.name { font-size: 30.500px; font-weight: 600; line-height: 38px; }
.seen { font-size: 23.500px; line-height: 26px; letter-spacing: .36px; color: #7f847f; }
.video { margin: 25px 0 0 0; }
.phone { margin: 22px 0 0 49px; }

.chat {
  height: 1450px;
  position: relative;
  overflow: hidden;
  display: flex;
  flex-direction: column;
  align-items: flex-start;
  padding: 0 32px;
  background: #f5f2eb;
}
.wallpaper { position: absolute; left: 0; top: 0; width: 828px; height: 1450px; fill: none; stroke: #eadfd1; stroke-width: 5.500; stroke-linejoin: round; stroke-linecap: round; }
.wallpaper text { font-family: Inter, sans-serif; font-weight: 600; }
.wallpaper .bib { fill: #eadfd1; stroke: none; font-weight: 500; }

.msg {
  position: relative;
  flex: none;
  margin-bottom: 24px;
  padding: 11px 21px 15px;
  border-radius: 23px;
  background: #fff;
  box-shadow: 0 2px 1px rgba(60,50,30,.13);
}
.msg p { margin: 0; font-size: 32.500px; line-height: 44px; white-space: nowrap; }
.t1 { letter-spacing: -.12px; }
.t2 { letter-spacing: -.18px; }
.t3 { letter-spacing: -.28px; }
.t4 { letter-spacing: -.37px; }
.t5 { letter-spacing: -.8px; }
.out { width: 622px; align-self: flex-end; background: #d0fecf; }
.first { margin-top: -24px; }
.w1 { width: 554px; }
.w2 { width: 210px; }
.w3 { width: 582px; }
.w4 { width: 570px; }
.w5 { width: 622px; }
.reacted { margin-bottom: 50px; }
.meta {
  position: absolute; right: 19px; bottom: 10px;
  display: flex; align-items: center; gap: 6px;
  font-size: 23.200px; line-height: 28px; letter-spacing: 1px; color: #808080;
}
.out .meta { right: 18px; color: #6f8a6f; }
.meta svg { width: 32px; height: 22px; }
.tail { position: absolute; bottom: -1px; width: 24px; height: 34px; }
.in .tail { left: -11px; fill: #fff; }
.out .tail { right: -11px; fill: #d0fecf; }
.reaction {
  position: absolute; left: 22px; top: 64px;
  display: flex; align-items: center; justify-content: center;
  width: 68px; height: 49px; border-radius: 25px;
  background: #fff; box-shadow: 0 0 0 2px #f5f2eb, 0 3px 2px 1px rgba(60,50,30,.14);
}
.day {
  align-self: center; flex: none;
  width: 200px; height: 40px; margin: 46px 0 26px; border-radius: 16px;
  background: rgba(255,255,255,.7); box-shadow: 0 2px 1px rgba(60,50,30,.14);
  font-size: 24.500px; font-weight: 600; line-height: 40px; letter-spacing: .6px; text-align: center;
}
.deleted { height: 60px; margin-bottom: 6px; padding: 6px 17px; display: flex; gap: 6px; }
.deleted p { font-size: 29px; font-style: italic; line-height: 42px; letter-spacing: -.1px; color: #808080; }
.deleted .meta { right: 21px; bottom: 9px; }
.ban { margin-top: 8px; fill: none; stroke: #9b9b9b; stroke-width: 3; }

.composer { height: 157px; border-top: 1px solid #ababab; background: #f3f3f3; }
.row { display: flex; align-items: flex-start; padding: 14px 0 0 27px; }
.plus { margin-top: 10px; }
.field {
  width: 546px; height: 60px; margin-left: 27px; padding: 11px 22px 0 0;
  display: flex; justify-content: flex-end;
  border: 1px solid #b4b4b4; border-radius: 30px; background: #fff;
}
.cam { margin: 11px 0 0 37px; }
.mic { margin: 5px 0 0 37px; }
.home { width: 296px; height: 10px; margin: 56px auto 0; border-radius: 5px; background: #000; }
```
